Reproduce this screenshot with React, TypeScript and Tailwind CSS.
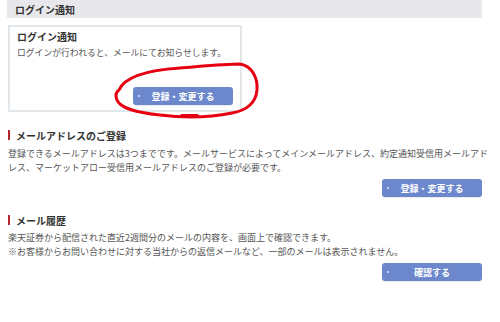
const font = "font-['Noto_Sans_CJK_JP',sans-serif]"

function ActionButton({ label }: { label: string }) {
  return (
    <button
      type="button"
      className="relative h-[18px] w-[100px] rounded-[3px] bg-[#6d87cd] text-[9px] font-bold leading-none text-white shadow-[0_1px_0_rgba(0,0,0,0.08)]"
    >
      <span className="absolute left-[5px] top-1/2 h-[2px] w-[2px] -translate-y-1/2 rounded-full bg-white/80" />
      {label}
    </button>
  )
}

function SectionHeading({ title }: { title: string }) {
  return (
    <h2 className="flex h-[14px] items-center gap-[6px] text-[10px] font-bold text-[#333]">
      <span className="h-[10px] w-[2px] bg-[#b3262a]" />
      {title}
    </h2>
  )
}

function HandCircle() {
  // red marker scribble drawn over the first button
  return (
    <svg className="pointer-events-none absolute left-0 top-0" width="500" height="322" viewBox="0 0 500 322">
      <path
        d="M119 90 C125 76 150 70 180 68 C205 66 225 64 240 64 C252 66 258 78 257 90 C256 102 248 110 232 113 C212 117 185 118 160 115 C138 113 120 108 117 100 C115 95 116 92 119 90 Z"
        fill="none"
        stroke="#e60012"
        strokeWidth="3"
        strokeLinejoin="round"
      />
      <path d="M182 116 L197 116" stroke="#e60012" strokeWidth="4" strokeLinecap="round" />
    </svg>
  )
}

export default function App() {
  return (
    <div className={`relative h-[322px] w-[500px] overflow-hidden bg-white ${font}`}>
      <div className="w-[482px] pl-[8px]">
        <div className="-ml-px flex h-[18px] items-center bg-[#e8e8ec] pl-[8px] text-[10px] font-bold text-[#333]">
          ログイン通知
        </div>

        <div className="mt-[7px] flex h-[87px] w-[234px] flex-col border-2 border-[#e1e7ea] px-[7px] pt-[3px]">
          <p className="text-[10px] font-bold leading-[14px] text-[#333]">ログイン通知</p>
          <p className="mt-[2px] text-[8.8px] leading-[13px] text-[#555]">ログインが行われると、メールにてお知らせします。</p>
          <div className="mb-[5px] mt-auto flex justify-end">
            <ActionButton label="登録・変更する" />
          </div>
        </div>

        <section className="mt-[16px]">
          <SectionHeading title="メールアドレスのご登録" />
          <p className="-mr-[6px] mt-[5px] text-[9px] leading-[14px] text-[#555]">
            登録できるメールアドレスは3つまでです。メールサービスによってメインメールアドレス、約定通知受信用メールアドレス、マーケットアロー受信用メールアドレスのご登録が必要です。
          </p>
          <div className="mt-[4px] flex justify-end">
            <ActionButton label="登録・変更する" />
          </div>
        </section>

        <section className="mt-[16px]">
          <SectionHeading title="メール履歴" />
          <p className="mt-[4px] text-[9px] leading-[14px] text-[#555]">
            楽天証券から配信された直近2週間分のメールの内容を、画面上で確認できます。
            <br />
            ※お客様からお問い合わせに対する当社からの返信メールなど、一部のメールは表示されません。
          </p>
          <div className="mt-[4px] flex justify-end">
            <ActionButton label="確認する" />
          </div>
        </section>
      </div>

      <HandCircle />
    </div>
  )
}
